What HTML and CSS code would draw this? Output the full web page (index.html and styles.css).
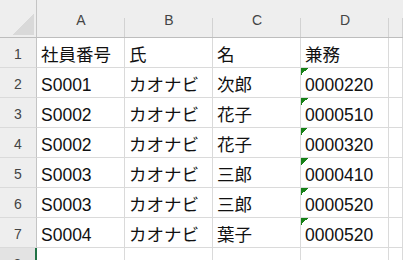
FILE: index.html
```html
<!DOCTYPE html>
<html lang="ja">
<head>
<meta charset="utf-8">
<title>Sheet</title>
<link rel="stylesheet" href="styles.css">
</head>
<body>
<div class="sheet">
  <div class="corner"></div>
  <div class="colhead">A</div>
  <div class="colhead">B</div>
  <div class="colhead">C</div>
  <div class="colhead">D</div>
  <div class="colhead"></div>

  <div class="rowhead">1</div>
  <div class="cell">社員番号</div>
  <div class="cell">氏</div>
  <div class="cell">名</div>
  <div class="cell">兼務</div>
  <div class="cell"></div>

  <div class="rowhead">2</div>
  <div class="cell">S0001</div>
  <div class="cell">カオナビ</div>
  <div class="cell">次郎</div>
  <div class="cell flag">0000220</div>
  <div class="cell"></div>

  <div class="rowhead">3</div>
  <div class="cell">S0002</div>
  <div class="cell">カオナビ</div>
  <div class="cell">花子</div>
  <div class="cell flag">0000510</div>
  <div class="cell"></div>

  <div class="rowhead">4</div>
  <div class="cell">S0002</div>
  <div class="cell">カオナビ</div>
  <div class="cell">花子</div>
  <div class="cell flag">0000320</div>
  <div class="cell"></div>

  <div class="rowhead">5</div>
  <div class="cell">S0003</div>
  <div class="cell">カオナビ</div>
  <div class="cell">三郎</div>
  <div class="cell flag">0000410</div>
  <div class="cell"></div>

  <div class="rowhead">6</div>
  <div class="cell">S0003</div>
  <div class="cell">カオナビ</div>
  <div class="cell">三郎</div>
  <div class="cell flag">0000520</div>
  <div class="cell"></div>

  <div class="rowhead">7</div>
  <div class="cell">S0004</div>
  <div class="cell">カオナビ</div>
  <div class="cell">葉子</div>
  <div class="cell flag">0000520</div>
  <div class="cell"></div>

  <div class="rowhead sel">8</div>
  <div class="cell"></div>
  <div class="cell"></div>
  <div class="cell"></div>
  <div class="cell"></div>
  <div class="cell"></div>
</div>
</body>
</html>
```

FILE: styles.css
```css
html, body {
  margin: 0;
  padding: 0;
  background: #ffffff;
  overflow: hidden;
}

body {
  width: 403px;
  height: 260px;
  font-family: "Liberation Sans", "Noto Sans CJK JP", sans-serif;
}

.sheet {
  display: grid;
  grid-template-columns: 37px 88px 88px 88px 88px 1fr;
  grid-template-rows: 38px repeat(8, 30px);
}

.corner,
.colhead,
.rowhead,
.cell {
  box-sizing: border-box;
  min-width: 0;
}

.corner {
  background-color: #eeeeee;
  border-right: 1px solid #c4c4c4;
  border-bottom: 1px solid #bdbdbd;
  background-image: linear-gradient(to bottom right, transparent 50%, #d9d9d9 50%);
  background-repeat: no-repeat;
  background-size: 21px 21px;
  background-position: right 2px bottom 2px;
}

.colhead {
  background-color: #eeeeee;
  border-bottom: 1px solid #bdbdbd;
  background-image: linear-gradient(#d2d2d2, #d2d2d2);
  background-repeat: no-repeat;
  background-position: right bottom;
  background-size: 1px 19px;
  display: flex;
  justify-content: center;
  padding-top: 13px;
  font-size: 14px;
  line-height: 14px;
  color: #444444;
}

.rowhead {
  background-color: #eeeeee;
  border-right: 1px solid #c4c4c4;
  border-bottom: 1px solid #dadada;
  text-align: center;
  padding-top: 9px;
  font-size: 14px;
  line-height: 14px;
  color: #444444;
}

.rowhead.sel {
  background-color: #e3e3e3;
  border-right: 2px solid #217346;
}

.cell {
  border-right: 1px solid #dadada;
  border-bottom: 1px solid #dadada;
  padding: 8px 0 0 4px;
  font-size: 17.5px;
  line-height: 18px;
  color: #111111;
  white-space: nowrap;
  overflow: hidden;
}

.flag {
  background-image: linear-gradient(to bottom right, #168016 50%, transparent 50%);
  background-repeat: no-repeat;
  background-size: 7px 7px;
}
```
